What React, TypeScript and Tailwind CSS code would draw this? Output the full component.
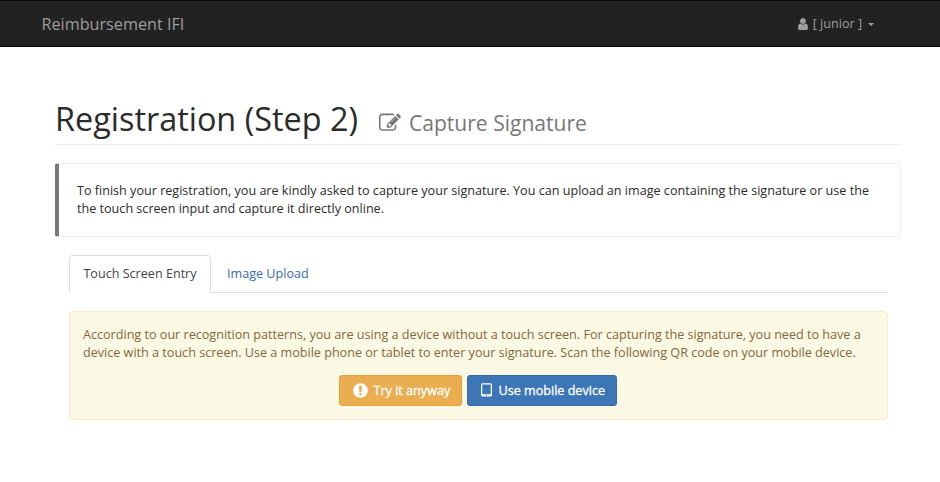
import React from 'react';

const paths = {
  user: 'M1536 1399q0 109-62.5 187t-150.5 78h-854q-88 0-150.5-78t-62.5-187q0-85 8.5-160.5t31.5-152 58.5-131 94-89 134.5-34.5q131 128 313 128t313-128q76 0 134.5 34.5t94 89 58.5 131 31.5 152 8.5 160.5zm-256-887q0 159-112.5 271.5t-271.5 112.5-271.5-112.5-112.5-271.5 112.5-271.5 271.5-112.5 271.5 112.5 112.5 271.5z',
  edit: 'M888 1184l116-116-152-152-116 116v56h96v96h56zM1328 464q-16-8-25 1l-358 358q-9 9-1 17t17-1l358-358q17-9 9-17zM1408 1058v190q0 119-84.500 203.500t-203.500 84.500h-832q-119 0-203.500-84.500t-84.500-203.500v-832q0-119 84.500-203.500t203.500-84.500h832q63 0 117 25 15 7 18 23 3 17-9 29l-49 49q-14 14-32 8-23-6-45-6h-832q-66 0-113 47t-47 113v832q0 66 47 113t113 47h832q66 0 113-47t47-113v-126q0-13 9-22l64-64q15-15 35-7t20 29zm-96-738l288 288-672 672h-288v-288zm444 132l-92 92-288-288 92-92q28-28 68-28t68 28l152 152q28 28 28 68t-28 68z',
  alert: 'M896 128q209 0 385.5 103t279.5 279.5 103 385.5-103 385.5-279.5 279.5-385.5 103-385.5-103-279.5-279.5-103-385.5 103-385.5 279.5-279.5 385.5-103zm128 1247v-190q0-14-9-23.5t-22-9.500h-192q-13 0-23 10t-10 23v190q0 13 10 23t23 10h192q13 0 22-9.500t9-23.500zm-2-344l18-621q0-12-10-18-10-8-24-8h-220q-14 0-24 8-10 6-10 18l17 621q0 10 10 17.500t24 7.500h185q14 0 23.500-7.500t10.500-17.500z',
  tablet: 'M960 1408q0-26-19-45t-45-19-45 19-19 45 19 45 45 19 45-19 19-45zm384-160v-960q0-13-9.500-22.500t-22.500-9.500h-832q-13 0-22.500 9.500t-9.500 22.500v960q0 13 9.500 22.500t22.500 9.500h832q13 0 22.500-9.500t9.500-22.500zm128-960v1088q0 66-47 113t-113 47h-832q-66 0-113-47t-47-113v-1088q0-66 47-113t113-47h832q66 0 113 47t47 113z',
};

function Icon({ name, className }: { name: keyof typeof paths; className: string }) {
  return (
    <svg viewBox="0 0 1792 1792" fill="currentColor" className={`shrink-0 ${className}`} aria-hidden="true">
      <path d={paths[name]} />
    </svg>
  );
}

export default function App() {
  return (
    <div className="min-h-[482px] bg-white font-['Open_Sans',sans-serif] text-[12.6px] leading-[18px] text-[#2b2b2b]">
      <nav className="flex h-[47px] items-center justify-between border-y border-[#080808] bg-[#222] pr-[66px] pl-[41.5px] text-[#9d9d9d]">
        <a href="#" className="text-[16.2px] leading-[18px]">Reimbursement IFI</a>
        <button className="flex items-center pt-px">
          <Icon name="user" className="mr-[3px] size-[14px]" />
          <span>[ junior ]</span>
          <span className="ml-[6px] mt-px border-x-[3px] border-t-[3px] border-x-transparent border-t-[#9d9d9d]" />
        </button>
      </nav>

      <main className="mr-[39px] ml-[55px] pt-[53px]">
        <h1 className="flex h-[45px] items-start border-b border-[#eee] text-[32.4px] leading-[36px] whitespace-nowrap">
          <span>Registration (Step 2)</span>
          <small className="ml-[21px] flex items-center pt-[10px] text-[21.05px] leading-[26px] text-[#777]">
            <Icon name="edit" className="mr-[8px] size-[22px]" />
            Capture Signature
          </small>
        </h1>

        <section className="mt-[18px] h-[74px] rounded-[3px] border border-l-4 border-[#eee] border-l-[#777] py-[18px] pl-[18px] whitespace-nowrap">
          To finish your registration, you are kindly asked to capture your signature. You can upload an image containing the signature or use the
          <br />
          the touch screen input and capture it directly online.
        </section>

        <div className="mr-[13px] ml-[14px] mt-[18px]">
          <div className="flex h-[38px] border-b border-[#ddd]">
            <button className="h-[38px] w-[142px] rounded-t border border-[#ddd] border-b-white bg-white text-[#444]">Touch Screen Entry</button>
            <button className="ml-[16px] pt-px text-[#396cab]">Image Upload</button>
          </div>

          <section className="mt-[18px] h-[109px] rounded border border-[#f8ebcc] bg-[#fbf8e3] px-[13px] pt-[14px] whitespace-nowrap text-[#83683f]">
            <p>
              According to our recognition patterns, you are using a device without a touch screen. For capturing the signature, you need to have a
              <br />
              device with a touch screen. Use a mobile phone or tablet to enter your signature. Scan the following QR code on your mobile device.
            </p>
            <div className="mt-[13px] mr-[2px] flex justify-center gap-[5px] font-medium text-white">
              <button className="flex h-[31px] w-[123px] items-center rounded-[3px] border border-[#e6a039] bg-[#eaae51] pl-[12px] [-webkit-text-stroke:0.3px_white]">
                <Icon name="alert" className="mr-[5px] size-[17px]" /><span className="pt-px">Try it anyway</span>
              </button>
              <button className="flex h-[31px] w-[150px] items-center rounded-[3px] border border-[#346aa6] bg-[#3d76b7] pl-[10px] [-webkit-text-stroke:0.3px_white]">
                <Icon name="tablet" className="mr-[4px] mb-px size-[17px]" /><span className="pt-px">Use mobile device</span>
              </button>
            </div>
          </section>
        </div>
      </main>
    </div>
  );
}
